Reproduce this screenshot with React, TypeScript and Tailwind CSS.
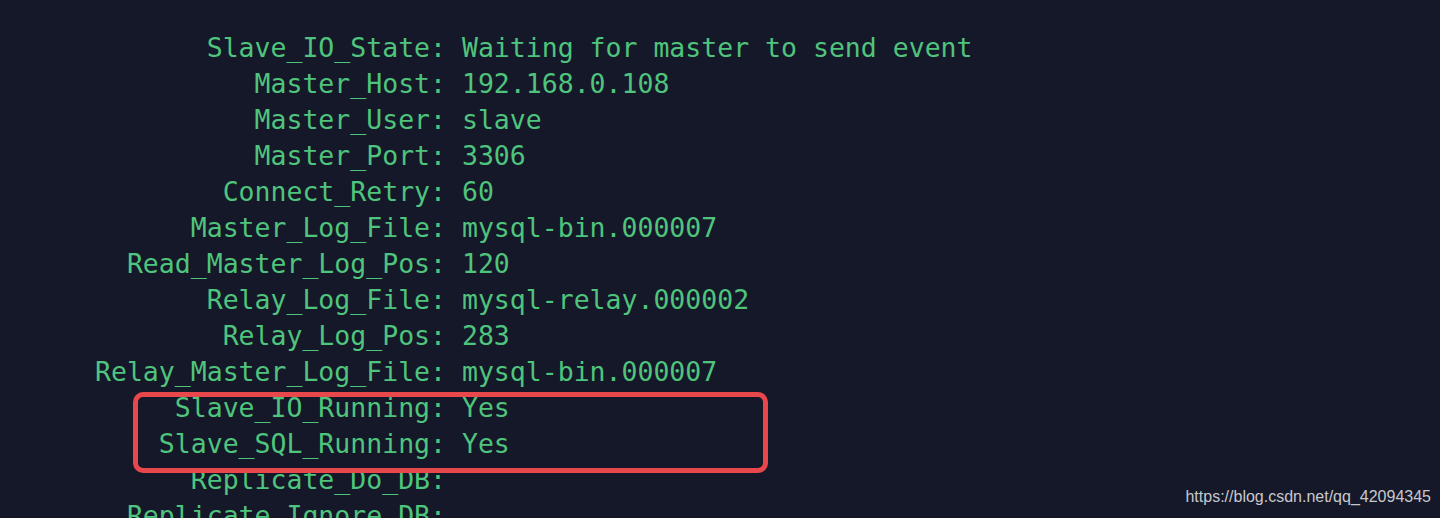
const rows: [string, string][] = [
  ['Slave_IO_State', 'Waiting for master to send event'],
  ['Master_Host', '192.168.0.108'],
  ['Master_User', 'slave'],
  ['Master_Port', '3306'],
  ['Connect_Retry', '60'],
  ['Master_Log_File', 'mysql-bin.000007'],
  ['Read_Master_Log_Pos', '120'],
  ['Relay_Log_File', 'mysql-relay.000002'],
  ['Relay_Log_Pos', '283'],
  ['Relay_Master_Log_File', 'mysql-bin.000007'],
  ['Slave_IO_Running', 'Yes'],
  ['Slave_SQL_Running', 'Yes'],
  ['Replicate_Do_DB', ''],
  ['Replicate_Ignore_DB', ''],
]

export default function App() {
  return (
    <div className="relative h-[518px] w-[1440px] overflow-hidden bg-[#151829]">
      <div
        className="pl-[95px] pt-[30px] text-[26.5px] leading-[36px] text-[#4fc47c] whitespace-pre"
        style={{ fontFamily: '"DejaVu Sans Mono", "Liberation Mono", monospace' }}
      >
        {rows.map(([key, value]) => (
          <div key={key}>
            {(key + ':').padStart(22, ' ')}
            {value ? ' ' + value : ''}
          </div>
        ))}
      </div>

      {/* highlight box */}
      <div className="absolute left-[133px] top-[392px] h-[81px] w-[635px] rounded-[10px] border-[5px] border-[#e8474c]" />

      <div
        className="absolute bottom-[9px] right-[9px] text-[16px] text-[#c8c8cc]"
        style={{ fontFamily: '"Liberation Sans", Arial, sans-serif' }}
      >
        https://blog.csdn.net/qq_42094345
      </div>
    </div>
  )
}
